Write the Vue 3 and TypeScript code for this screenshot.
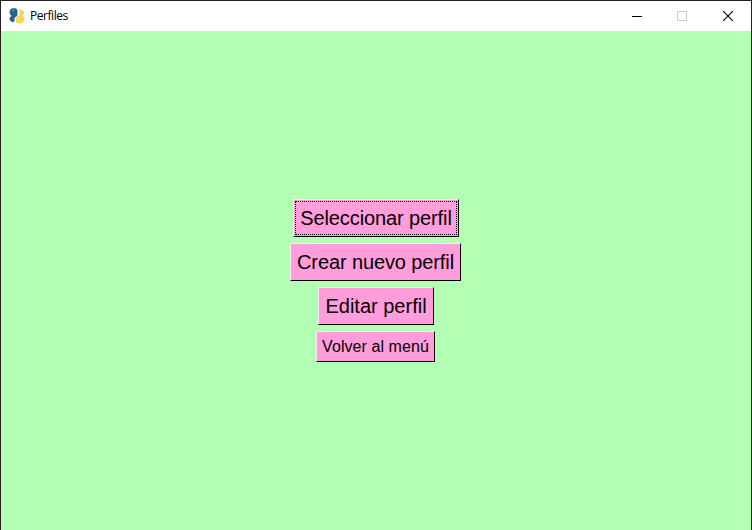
<script setup lang="ts">
interface ProfileAction {
  id: string
  label: string
  focused?: boolean
}

const actions: ProfileAction[] = [
  { id: 'select', label: 'Seleccionar perfil', focused: true },
  { id: 'create', label: 'Crear nuevo perfil' },
  { id: 'edit', label: 'Editar perfil' },
  { id: 'back', label: 'Volver al menú' },
]
</script>

<template>
  <div class="window">
    <header class="titlebar">
      <svg class="logo" width="16" height="16" viewBox="0 0 16 16">
        <path fill="#2d6288" d="M1 2.5Q1.5.3 4 .3H6Q8.5.5 8.5 3V6.5Q8.5 8.5 6.5 9L5.5 10V13Q5 14.5 3 14Q.4 12.5.4 10.5Q.5 9 2.5 8L1 6Q0 4 1 2.5Z" />
        <path fill="#fbd354" d="M10 1.5Q13 1 14.8 3.5Q16 6 13.5 7.5L15 9.5Q16.2 12 14.5 14Q13.5 15.5 11 15.5H9Q6.7 15.3 6.7 13V10.5L10.5 6.5Z" />
        <path d="M3.5 2.8h1.2M11.3 13.4h1.2" stroke="#fff" stroke-opacity=".7" />
      </svg>
      <span class="title">Perfiles</span>
      <div class="controls">
        <span class="control">
          <svg width="10" height="10" viewBox="0 0 10 10"><path d="M0 5.5H10" stroke="#000" /></svg>
        </span>
        <span class="control maximize">
          <svg width="10" height="10" viewBox="0 0 10 10"><rect x=".5" y=".5" width="9" height="9" fill="none" stroke="#ccc" /></svg>
        </span>
        <span class="control">
          <svg width="10" height="10" viewBox="0 0 10 10"><path d="M0 0L10 10M10 0L0 10" stroke="#000" stroke-width="1.1" /></svg>
        </span>
      </div>
    </header>
    <main class="content">
      <button v-for="action in actions" :key="action.id" type="button" :class="['action', action.id, { focused: action.focused }]">
        <span class="label">{{ action.label }}</span>
      </button>
    </main>
  </div>
</template>

<style>
body {
  margin: 0;
  overflow: hidden;
}
</style>

<style scoped>
.window {
  box-sizing: border-box;
  width: 752px;
  height: 530px;
  display: flex;
  flex-direction: column;
  border: 1px solid #231f23;
  border-bottom: 0;
  background: #b3ffb3;
}
.titlebar {
  height: 30px;
  flex: none;
  display: flex;
  align-items: center;
  background: #fff;
}
.logo {
  margin-left: 8px;
}
.title {
  margin-left: 5px;
  font: 12px/16px "Open Sans", "Noto Sans", sans-serif;
  letter-spacing: -0.45px;
  color: #000;
}
.controls {
  margin-left: auto;
  display: flex;
  height: 100%;
}
.control {
  box-sizing: border-box;
  width: 45.5px;
  display: flex;
  align-items: center;
  justify-content: center;
}
.maximize {
  padding-right: 1px;
}
.control svg {
  display: block;
  margin-top: -1px;
}
.content {
  flex: 1;
  display: flex;
  flex-direction: column;
  align-items: center;
  gap: 6px;
  padding-top: 168px;
}
.action {
  box-sizing: border-box;
  height: 38px;
  padding: 1px;
  border: 1px solid;
  border-color: #ffe3f6 #000 #000 #ffe3f6;
  border-radius: 0;
  background: #ff9edb;
  color: #000;
  font-family: "Liberation Sans", Arial, sans-serif;
  font-size: 20px;
  line-height: 24px;
  letter-spacing: -0.11px;
}
.label {
  box-sizing: border-box;
  display: flex;
  align-items: center;
  justify-content: center;
  height: 100%;
  border: 1px solid transparent;
  white-space: nowrap;
}
.focused .label {
  border: 1px dotted #000;
}
.select {
  width: 166px;
}
.create {
  width: 171px;
  margin-right: 1px;
}
.edit {
  width: 116px;
  letter-spacing: 0;
}
.back {
  width: 119px;
  height: 31px;
  margin-right: 1px;
  font-size: 16px;
  line-height: 20px;
  letter-spacing: 0.07px;
}
</style>
